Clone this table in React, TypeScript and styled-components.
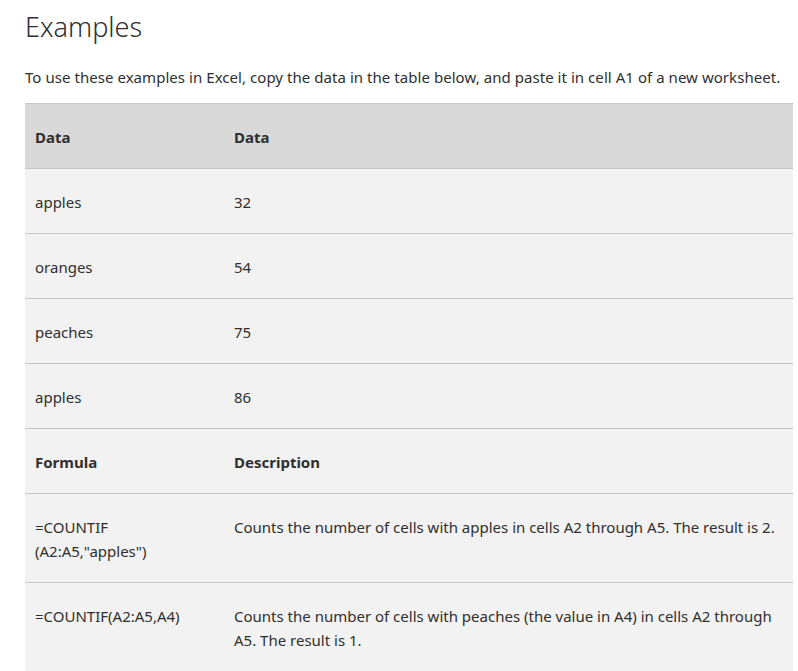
import React from "react";
import styled, { createGlobalStyle } from "styled-components";

const Global = createGlobalStyle`
  html, body { margin: 0; padding: 0; background: #ffffff; }
  body { font-family: "Noto Sans", "Open Sans", sans-serif; color: #2f2f2f; }
`;

const Page = styled.main`
  padding: 8px 5px 0 25px;
`;

const Title = styled.h2`
  margin: 0;
  font-family: "Noto Sans", sans-serif;
  font-weight: 300;
  font-size: 27px;
  line-height: 38px;
  color: #2f2f2f;
`;

const Intro = styled.p`
  margin: 19px 0 14px;
  font-size: 15px;
  line-height: 24px;
  letter-spacing: 0.05px;
  color: #2f2f2f;
`;

const Table = styled.table`
  width: 768px;
  border-collapse: collapse;
  border-top: 1px solid #c6c6c6;
  font-size: 15px;
  line-height: 24px;
`;

const Row = styled.tr<{ $head?: boolean }>`
  background: ${(p) => (p.$head ? "#d9d9d9" : "#f2f2f2")};
  border-bottom: 1px solid #c6c6c6;
`;

const Cell = styled.td<{ $bold?: boolean; $first?: boolean }>`
  padding: 21px 10px 19px;
  vertical-align: top;
  text-align: left;
  width: ${(p) => (p.$first ? "179px" : "auto")};
  font-weight: ${(p) => (p.$bold ? 700 : 400)};
  color: #2f2f2f;
`;

const data: [string, string][] = [
  ["apples", "32"],
  ["oranges", "54"],
  ["peaches", "75"],
  ["apples", "86"],
];

const formulas: [React.ReactNode, string][] = [
  [
    <>
      =COUNTIF
      <br />
      (A2:A5,"apples")
    </>,
    "Counts the number of cells with apples in cells A2 through A5. The result is 2.",
  ],
  [
    "=COUNTIF(A2:A5,A4)",
    "Counts the number of cells with peaches (the value in A4) in cells A2 through A5. The result is 1.",
  ],
];

export default function App() {
  return (
    <Page>
      <Global />
      <Title>Examples</Title>
      <Intro>
        To use these examples in Excel, copy the data in the table below, and paste it in cell A1 of a new worksheet.
      </Intro>
      <Table>
        <tbody>
          <Row $head>
            <Cell $bold $first>Data</Cell>
            <Cell $bold>Data</Cell>
          </Row>
          {data.map(([a, b], i) => (
            <Row key={i}>
              <Cell $first>{a}</Cell>
              <Cell>{b}</Cell>
            </Row>
          ))}
          <Row>
            <Cell $bold $first>Formula</Cell>
            <Cell $bold>Description</Cell>
          </Row>
          {formulas.map(([f, d], i) => (
            <Row key={i}>
              <Cell $first>{f}</Cell>
              <Cell>{d}</Cell>
            </Row>
          ))}
        </tbody>
      </Table>
    </Page>
  );
}
